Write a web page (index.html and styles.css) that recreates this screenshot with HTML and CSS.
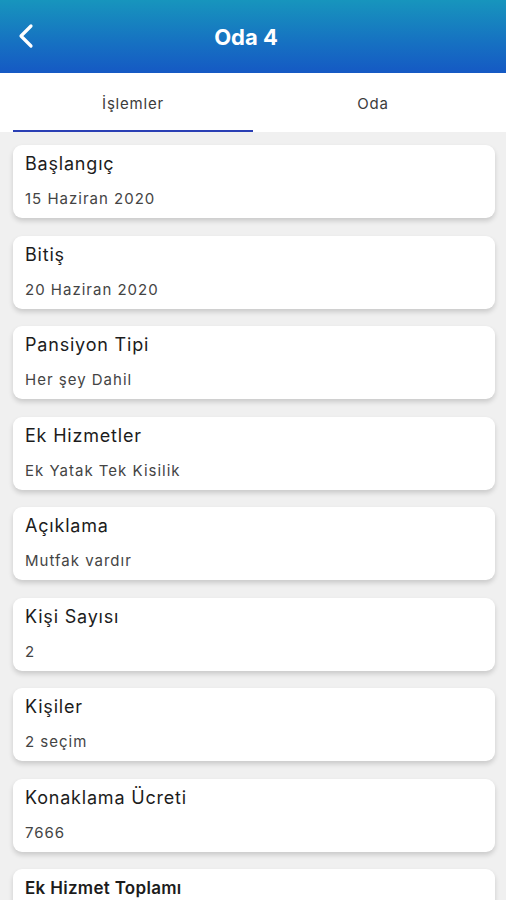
FILE: index.html
```html
<!DOCTYPE html>
<html lang="tr">
<head>
    <meta charset="UTF-8">
    <meta name="viewport" content="width=device-width, initial-scale=1.0">
    <title>Oda 4</title>
    <link rel="stylesheet" href="styles.css">
</head>
<body>
    <header class="topbar">
        <button class="back-btn" aria-label="Geri">
            <svg width="16" height="26" viewBox="0 0 16 26">
                <path d="M13 3 L3 13 L13 23" fill="none" stroke="#fff" stroke-width="3.2" stroke-linecap="round" stroke-linejoin="round"/>
            </svg>
        </button>
        <h1>Oda 4</h1>
    </header>

    <nav class="tabs">
        <div class="tab active">İşlemler</div>
        <div class="tab">Oda</div>
    </nav>

    <main class="list">
        <div class="card">
            <div class="label">Başlangıç</div>
            <div class="value">15 Haziran 2020</div>
        </div>
        <div class="card">
            <div class="label">Bitiş</div>
            <div class="value">20 Haziran 2020</div>
        </div>
        <div class="card">
            <div class="label">Pansiyon Tipi</div>
            <div class="value">Her şey Dahil</div>
        </div>
        <div class="card">
            <div class="label">Ek Hizmetler</div>
            <div class="value">Ek Yatak Tek Kisilik</div>
        </div>
        <div class="card">
            <div class="label">Açıklama</div>
            <div class="value">Mutfak vardır</div>
        </div>
        <div class="card">
            <div class="label">Kişi Sayısı</div>
            <div class="value">2</div>
        </div>
        <div class="card">
            <div class="label">Kişiler</div>
            <div class="value">2 seçim</div>
        </div>
        <div class="card">
            <div class="label">Konaklama Ücreti</div>
            <div class="value">7666</div>
        </div>
        <div class="card">
            <div class="label bold">Ek Hizmet Toplamı</div>
            <div class="value">0</div>
        </div>
    </main>
</body>
</html>
```

FILE: styles.css
```css
* {
    margin: 0;
    padding: 0;
    box-sizing: border-box;
}

body {
    font-family: Inter, "Noto Sans", sans-serif;
    background: #f0f0f0;
    color: #1c1c1c;
    height: 900px;
    overflow: hidden;
}

.topbar {
    height: 73px;
    background: linear-gradient(180deg, #1795bd 0%, #1670c2 60%, #1559c4 100%);
    display: flex;
    align-items: center;
    justify-content: center;
    position: relative;
    color: #fff;
}

.topbar h1 {
    font-size: 22px;
    font-weight: 700;
    margin-right: 14px;
}

.back-btn {
    position: absolute;
    left: 18px;
    top: 23px;
    background: none;
    border: none;
    display: flex;
}

.tabs {
    height: 59px;
    background: #fff;
    display: flex;
    padding: 0 13px;
}

.tab {
    flex: 1;
    display: flex;
    align-items: center;
    justify-content: center;
    font-size: 15px;
    letter-spacing: 0.8px;
    color: #3c3c3c;
    padding-top: 3px;
    border-bottom: 2px solid transparent;
}

.tab.active {
    border-bottom-color: #2a3fb4;
}

.list {
    padding: 13px 11px 0 13px;
    display: flex;
    flex-direction: column;
    gap: 17.5px;
}

.card {
    background: #fff;
    border-radius: 9px;
    height: 73px;
    flex-shrink: 0;
    padding: 7px 12px 0;
    box-shadow: 0 3px 5px rgba(0, 0, 0, 0.16);
}

.label {
    font-size: 18px;
    line-height: 24px;
    letter-spacing: 0.8px;
    color: #1c1c1c;
}

.label.bold {
    font-weight: 600;
    font-size: 17px;
    letter-spacing: 0.3px;
}

.value {
    font-size: 15px;
    line-height: 20px;
    letter-spacing: 1px;
    margin-top: 13px;
    color: #444;
}
```
